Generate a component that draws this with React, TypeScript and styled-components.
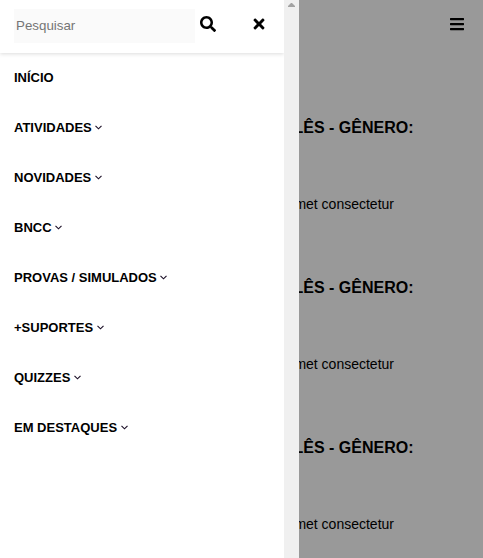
import React from 'react';
import styled, { createGlobalStyle } from 'styled-components';
import { FaBars, FaSearch, FaTimes } from 'react-icons/fa';

const GlobalStyle = createGlobalStyle`
  * { box-sizing: border-box; }
  body { margin: 0; font-family: "Liberation Sans", Arial, sans-serif; color: #000; overflow: hidden; }
`;

const Screen = styled.div`
  display: grid;
  grid-template-columns: 299px 1fr;
  height: 100vh;
  overflow: hidden;
  background: #999;
`;

const Drawer = styled.aside`
  display: grid;
  grid-template-columns: 1fr 15px;
  background: #fff;
`;

const Panel = styled.div`
  min-width: 0;
  overflow: hidden;
`;

const SearchBar = styled.form`
  display: flex;
  align-items: flex-start;
  height: 53px;
  padding: 9px 0 0 14px;
  box-shadow: 0 1px 4px rgba(0, 0, 0, 0.14);
`;

const SearchInput = styled.input`
  width: 181px;
  height: 34px;
  padding: 0 2px 2px;
  border: 0;
  outline: 0;
  background: #fafafa;
  font: 13.3333px "Liberation Sans", Arial, sans-serif;
  &::placeholder { color: #757575; }
`;

const IconButton = styled.button<{ $gap: number }>`
  display: flex;
  margin: 7px 0 0 ${(p) => p.$gap}px;
  padding: 0;
  border: 0;
  background: none;
  color: #000;
  font-size: 16px;
`;

const Menu = styled.nav`
  display: flex;
  flex-direction: column;
`;

const MenuItem = styled.a`
  display: flex;
  align-items: center;
  height: 50px;
  padding: 0 0 2px 14px;
  font-size: 13px;
  font-weight: 700;
  white-space: nowrap;
`;

const Chevron = styled.svg`
  width: 7px;
  height: 5px;
  margin-left: 3.5px;
  fill: none;
  stroke: #1c1028;
  stroke-width: 1.15;
`;

const ScrollTrack = styled.div`
  display: flex;
  justify-content: center;
  background: #f0f0f0;
`;

const ScrollArrow = styled.svg`
  width: 7px;
  height: 4px;
  margin-top: 3px;
  fill: #a3a3a3;
`;

const Page = styled.main`
  min-width: 0;
  overflow: hidden;
`;

const TopBar = styled.header`
  display: flex;
  justify-content: flex-end;
  height: 107px;
  padding: 16px 18px 0 0;
  font-size: 16px;
`;

const Post = styled.article`
  display: flex;
  flex-direction: column;
  align-items: flex-end;
  height: 160px;
  padding: 12px 69.5px 0 0;
  white-space: nowrap;
`;

const PostTitle = styled.h2`
  margin: 0;
  font-size: 16px;
  line-height: 18px;
`;

const PostText = styled.p`
  margin: 59px 19.5px 0 0;
  font-size: 14px;
  line-height: 16px;
`;

const items = [
  { label: 'INÍCIO', sub: false },
  { label: 'ATIVIDADES', sub: true },
  { label: 'NOVIDADES', sub: true },
  { label: 'BNCC', sub: true },
  { label: 'PROVAS / SIMULADOS', sub: true },
  { label: '+SUPORTES', sub: true },
  { label: 'QUIZZES', sub: true },
  { label: 'EM DESTAQUES', sub: true },
];

export default function App() {
  return (
    <>
      <GlobalStyle />
      <Screen>
        <Drawer>
          <Panel>
            <SearchBar>
              <SearchInput placeholder="Pesquisar" />
              <IconButton $gap={4.5} type="button" aria-label="Pesquisar"><FaSearch /></IconButton>
              <IconButton $gap={35} type="button" aria-label="Fechar"><FaTimes /></IconButton>
            </SearchBar>
            <Menu>
              {items.map((item) => (
                <MenuItem key={item.label}>
                  {item.label}
                  {item.sub && <Chevron viewBox="0 0 7 5"><path d="M.5.8l3 3 3-3" /></Chevron>}
                </MenuItem>
              ))}
            </Menu>
          </Panel>
          <ScrollTrack>
            <ScrollArrow viewBox="0 0 7 4"><path d="M3 0h1l3 3v1H0V3z" /></ScrollArrow>
          </ScrollTrack>
        </Drawer>
        <Page>
          <TopBar><FaBars /></TopBar>
          {[1, 2, 3].map((n) => (
            <Post key={n}>
              <PostTitle>INGLÊS - GÊNERO:</PostTitle>
              <PostText>amet consectetur</PostText>
            </Post>
          ))}
        </Page>
      </Screen>
    </>
  );
}
